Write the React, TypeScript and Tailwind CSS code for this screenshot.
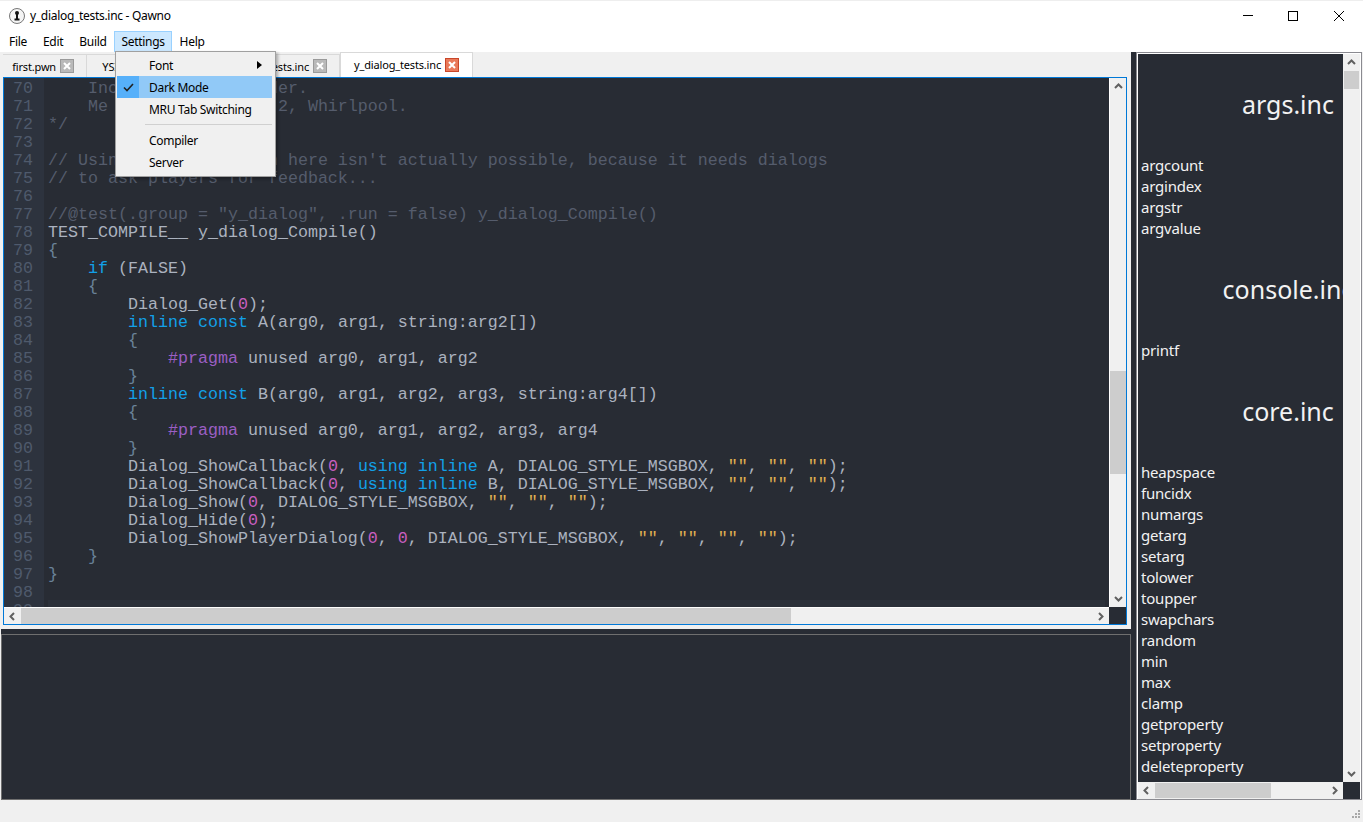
import type { ReactNode } from 'react';

const UI_FONT = "font-['Noto_Sans','Open_Sans',sans-serif]";

const CODE: string[] = [
  '    Include in the header.',
  '    Me and others: SHA-2, Whirlpool.',
  '*/',
  '',
  "// Using a true version here isn't actually possible, because it needs dialogs",
  '// to ask players for feedback...',
  '',
  '//@test(.group = "y_dialog", .run = false) y_dialog_Compile()',
  'TEST_COMPILE__ y_dialog_Compile()',
  '{',
  '    if (FALSE)',
  '    {',
  '        Dialog_Get(0);',
  '        inline const A(arg0, arg1, string:arg2[])',
  '        {',
  '            #pragma unused arg0, arg1, arg2',
  '        }',
  '        inline const B(arg0, arg1, arg2, arg3, string:arg4[])',
  '        {',
  '            #pragma unused arg0, arg1, arg2, arg3, arg4',
  '        }',
  '        Dialog_ShowCallback(0, using inline A, DIALOG_STYLE_MSGBOX, "", "", "");',
  '        Dialog_ShowCallback(0, using inline B, DIALOG_STYLE_MSGBOX, "", "", "");',
  '        Dialog_Show(0, DIALOG_STYLE_MSGBOX, "", "", "");',
  '        Dialog_Hide(0);',
  '        Dialog_ShowPlayerDialog(0, 0, DIALOG_STYLE_MSGBOX, "", "", "", "");',
  '    }',
  '}',
  '',
  '',
];

const COMMENT_LINES = [0, 1, 2, 4, 5, 7];

const SECTIONS = [
  { title: 'args.inc', items: ['argcount', 'argindex', 'argstr', 'argvalue'] },
  { title: 'console.inc', items: ['printf'] },
  {
    title: 'core.inc',
    items: [
      'heapspace',
      'funcidx',
      'numargs',
      'getarg',
      'setarg',
      'tolower',
      'toupper',
      'swapchars',
      'random',
      'min',
      'max',
      'clamp',
      'getproperty',
      'setproperty',
      'deleteproperty',
    ],
  },
];

function highlight(line: string): ReactNode[] {
  const parts = line.split(/(\bif\b|\binline\b|\bconst\b|\busing\b|#pragma|\b\d+\b|""|[{}])/);
  return parts.map((part, i) => {
    if (['if', 'inline', 'const', 'using'].includes(part)) {
      return (
        <span key={i} className="text-[#12a0e8]">
          {part}
        </span>
      );
    }
    if (part === '#pragma') {
      return (
        <span key={i} className="text-[#9c5fc4]">
          {part}
        </span>
      );
    }
    if (part === '""') {
      return (
        <span key={i} className="text-[#e0b050]">
          {part}
        </span>
      );
    }
    if (part === '{' || part === '}') {
      return (
        <span key={i} className="text-[#6a8299]">
          {part}
        </span>
      );
    }
    if (/^\d+$/.test(part)) {
      return (
        <span key={i} className="text-[#c95fc0]">
          {part}
        </span>
      );
    }
    return <span key={i}>{part}</span>;
  });
}

function Arrow({ dir }: { dir: 'up' | 'down' | 'left' | 'right' }) {
  const points = {
    up: '2,7 5.5,3.5 9,7',
    down: '2,4 5.5,7.5 9,4',
    left: '7,2 3.5,5.5 7,9',
    right: '4,2 7.5,5.5 4,9',
  };
  return (
    <svg width="11" height="11" viewBox="0 0 11 11" fill="none">
      <polyline points={points[dir]} stroke="#606060" strokeWidth="2" />
    </svg>
  );
}

function CloseBox({ active }: { active?: boolean }) {
  return (
    <span
      className={
        active
          ? 'flex h-[14px] w-[14px] items-center justify-center border border-[#c9472a] bg-[#e9795a]'
          : 'flex h-[14px] w-[14px] items-center justify-center border border-[#9a9a9a] bg-[#b9b9b9]'
      }
    >
      <svg width="8" height="8" viewBox="0 0 8 8">
        <path d="M1 1 L7 7 M7 1 L1 7" stroke="#fff" strokeWidth="2" />
      </svg>
    </span>
  );
}

function Tab({ label, width, active }: { label: string; width: string; active?: boolean }) {
  return (
    <div
      className={
        active
          ? `${width} relative z-10 flex h-[25px] items-center justify-end gap-[4px] border border-b-0 border-[#d9d9d9] bg-white pr-[13px] pb-[1px]`
          : `${width} flex h-[23px] items-center justify-end gap-[4px] border-r border-t border-[#d9d9d9] bg-[#f0f0f0] pr-[12px]`
      }
    >
      <span className="whitespace-nowrap text-[11px] leading-none tracking-[-0.17px] text-black">{label}</span>
      <CloseBox active={active} />
    </div>
  );
}

function TitleBar() {
  return (
    <div className="flex h-[30px] items-center justify-between border-t border-[#eeeeee] bg-white">
      <div className="flex items-center gap-[5px] pl-[9px]">
        <svg width="16" height="16" viewBox="0 0 16 16">
          <circle cx="8" cy="8" r="7.5" fill="#f4f4f4" stroke="#777" />
          <circle cx="8" cy="5" r="2" fill="#111" />
          <rect x="7" y="5" width="2" height="6" fill="#111" />
          <rect x="5.5" y="10.5" width="5" height="2" fill="#111" />
        </svg>
        <span className="pt-px text-[12px] leading-none tracking-[-0.3px] text-black">y_dialog_tests.inc - Qawno</span>
      </div>
      <div className="flex items-center pr-px">
        <div className="flex h-[29px] w-[44px] items-center justify-center">
          <div className="h-px w-[10px] bg-black" />
        </div>
        <div className="flex h-[29px] w-[46px] items-center justify-center">
          <div className="h-[10px] w-[10px] border border-black" />
        </div>
        <div className="flex h-[29px] w-[46px] items-center justify-center">
          <svg width="10" height="10" viewBox="0 0 10 10">
            <path d="M0 0 L10 10 M10 0 L0 10" stroke="#000" strokeWidth="1" />
          </svg>
        </div>
      </div>
    </div>
  );
}

function MenuBar() {
  return (
    <div className="flex h-[22px] items-center bg-white pl-px text-[12px] tracking-[-0.3px] text-black">
      <div className="px-[8px] pt-px">File</div>
      <div className="px-[8px] pt-px">Edit</div>
      <div className="pl-[8px] pr-[7px] pt-px">Build</div>
      <div className="flex h-[21px] w-[58px] items-center justify-center border border-[#99d1ff] bg-[#cce8ff] pl-px pt-px">
        Settings
      </div>
      <div className="px-[8px] pt-px">Help</div>
    </div>
  );
}

function MenuRow({ label, checked, arrow }: { label: string; checked?: boolean; arrow?: boolean }) {
  return (
    <div className={checked ? 'flex h-[22px] items-center bg-[#91c9f7]' : 'flex h-[22px] items-center'}>
      <div
        className={
          checked
            ? 'flex h-[22px] w-[22px] items-center justify-center bg-[#56b0fa]'
            : 'h-[22px] w-[22px]'
        }
      >
        {checked && (
          <svg width="11" height="9" viewBox="0 0 11 9" fill="none">
            <path d="M1 4.5 L4 7.5 L10 1" stroke="#222" strokeWidth="1.6" />
          </svg>
        )}
      </div>
      <span className="pl-[10px] pt-px text-[12px] leading-none tracking-[-0.3px] text-black">{label}</span>
      {arrow && (
        <svg className="ml-auto mr-[10px]" width="5" height="8" viewBox="0 0 5 8">
          <path d="M0 0 L5 4 L0 8 Z" fill="#000" />
        </svg>
      )}
    </div>
  );
}

function SettingsMenu() {
  return (
    <div className="absolute left-[115px] top-[51px] z-20 w-[161px] border border-[#a0a0a0] bg-[#f0f0f0] pb-[3px] pl-px pr-[3px] pt-[2px] shadow-[2px_2px_3px_rgba(0,0,0,0.3)]">
      <MenuRow label="Font" arrow />
      <MenuRow label="Dark Mode" checked />
      <MenuRow label="MRU Tab Switching" />
      <div className="flex h-[9px] items-start pl-[28px] pt-[4px]">
        <div className="h-px w-full bg-[#d0d0d0]" />
      </div>
      <MenuRow label="Compiler" />
      <MenuRow label="Server" />
    </div>
  );
}

function Editor() {
  return (
    <div className="ml-[3px] flex h-[548px] w-[1124px] flex-col border border-[#0078d7] font-['Liberation_Mono',monospace] text-[16.667px] leading-[18px]">
      <div className="flex h-[529px]">
        <div className="h-full w-[40px] shrink-0 overflow-hidden bg-[#2d333e] pr-[11px] pt-[2px] text-right text-[#4f5a6c]">
          {CODE.map((_, i) => (
            <div key={i} className="h-[18px]">
              {70 + i}
            </div>
          ))}
        </div>
        <div className="h-full min-w-0 flex-1 overflow-hidden bg-[#282c34] pl-[4px] pr-[4px] pt-[2px] text-[#abb2bf]">
          {CODE.map((line, i) => (
            <div
              key={i}
              className={
                i === 29
                  ? '-mt-[2px] h-[20px] whitespace-pre bg-[#2c313a]'
                  : COMMENT_LINES.includes(i)
                    ? 'h-[18px] whitespace-pre text-[#555c6c]'
                    : 'h-[18px] whitespace-pre'
              }
            >
              {COMMENT_LINES.includes(i) ? line : highlight(line)}
            </div>
          ))}
        </div>
        <div className="flex w-[17px] shrink-0 flex-col items-center border-l border-white bg-[#f0f0f0]">
          <div className="flex h-[17px] items-center justify-center">
            <Arrow dir="up" />
          </div>
          <div className="mt-[276px] h-[103px] w-full bg-[#cdcdcd]" />
          <div className="mt-auto flex h-[17px] items-center justify-center">
            <Arrow dir="down" />
          </div>
        </div>
      </div>
      <div className="flex h-[17px] flex-1 items-stretch">
        <div className="flex flex-1 items-center border-t border-white bg-[#f0f0f0]">
          <div className="flex w-[17px] items-center justify-center">
            <Arrow dir="left" />
          </div>
          <div className="h-full w-[770px] bg-[#cdcdcd]" />
          <div className="ml-auto flex w-[17px] items-center justify-center">
            <Arrow dir="right" />
          </div>
        </div>
        <div className="w-[17px] bg-[#282c34]" />
      </div>
    </div>
  );
}

function Functions() {
  return (
    <div className="flex min-h-0 flex-1 flex-col border border-[#8a8a90] bg-white pl-px pr-px pt-px">
      <div className="flex min-h-0 flex-1">
        <div className="min-w-0 flex-1 overflow-hidden bg-[#282c34] text-[#f2f2f2]">
          <div className="w-[300px]">
            {SECTIONS.map((section) => (
              <div key={section.title}>
                <div className="flex h-[101px] items-center justify-center pb-[1px] text-[25px] leading-none">
                  {section.title}
                </div>
                {section.items.map((item) => (
                  <div key={item} className="h-[21px] pl-[3px] text-[15px] leading-[21px] tracking-[-0.2px]">
                    {item}
                  </div>
                ))}
              </div>
            ))}
          </div>
        </div>
        <div className="flex w-[17px] shrink-0 flex-col items-center bg-[#f0f0f0]">
          <div className="flex h-[17px] items-center justify-center">
            <Arrow dir="up" />
          </div>
          <div className="h-[18px] w-[15px] bg-[#cdcdcd]" />
          <div className="mt-auto flex h-[17px] items-center justify-center">
            <Arrow dir="down" />
          </div>
        </div>
      </div>
      <div className="flex h-[17px] shrink-0 items-stretch">
        <div className="flex flex-1 items-center bg-[#f0f0f0]">
          <div className="flex w-[17px] items-center justify-center">
            <Arrow dir="left" />
          </div>
          <div className="h-[15px] w-[116px] bg-[#cdcdcd]" />
          <div className="ml-auto flex w-[17px] items-center justify-center">
            <Arrow dir="right" />
          </div>
        </div>
        <div className="w-[17px] bg-[#282c34]" />
      </div>
    </div>
  );
}

export default function App() {
  return (
    <div className={`${UI_FONT} relative flex h-[822px] w-[1363px] flex-col overflow-hidden bg-[#f0f0f0]`}>
      <TitleBar />
      <MenuBar />
      <SettingsMenu />

      <div className="flex h-[748px]">
        <div className="flex w-[1131px] shrink-0 flex-col">
          <div className="flex h-[25px] items-end pl-[3px]">
            <Tab label="first.pwn" width="w-[84px]" />
            <Tab label="YSI.inc" width="w-[79px]" />
            <Tab label="y_dialog_all_tests.inc" width="w-[174px]" />
            <Tab label="y_dialog_tests.inc" width="w-[133px]" active />
          </div>
          <Editor />
          <div className="mt-[4px] flex min-h-0 flex-1 flex-col pl-px">
            <div className="h-[5px] bg-[#282c34]" />
            <div className="flex-1 border border-[#6f6f6f] bg-[#282c34]" />
          </div>
        </div>

        <div className="h-full w-[5px] shrink-0 bg-[#282c34]" />

        <div className="flex h-full w-[226px] shrink-0 flex-col">
          <Functions />
        </div>
      </div>

      <div className="relative flex-1">
        <svg className="absolute bottom-[3px] right-[2px]" width="10" height="10" viewBox="0 0 10 10" fill="#a8a8a8">
          <rect x="7" y="1" width="2" height="2" />
          <rect x="4" y="4" width="2" height="2" />
          <rect x="7" y="4" width="2" height="2" />
          <rect x="1" y="7" width="2" height="2" />
          <rect x="4" y="7" width="2" height="2" />
          <rect x="7" y="7" width="2" height="2" />
        </svg>
      </div>
    </div>
  );
}
